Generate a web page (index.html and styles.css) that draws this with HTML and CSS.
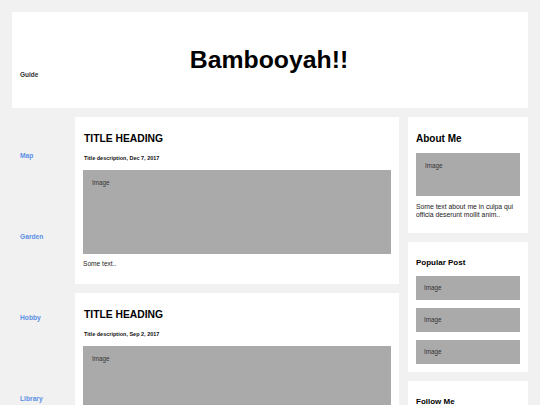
FILE: index.html
```html
<!DOCTYPE html>
<html lang="en">
<head>
  <meta charset="UTF-8" />
  <meta name="viewport" content="width=device-width, initial-scale=1.0" />
  <title>Bambooyah!!</title>
  <link rel="stylesheet" href="styles.css">
</head>
<body>
  <header class="masthead">
    <div class="masthead-nav">
      <a href="#" class="guide-link">Guide</a>
    </div>
    <h1 class="site-title">Bambooyah!!</h1>
    <div></div>
  </header>
  <div class="layout">
    <nav class="side-nav">
      <a href="#">Map</a>
      <a href="#">Garden</a>
      <a href="#">Hobby</a>
      <a href="#">Library</a>
    </nav>
    <main class="posts">
      <div class="card post">
        <h2>TITLE HEADING</h2>
        <h5>Title description, Dec 7, 2017</h5>
        <div class="fake-img post-img">Image</div>
        <p>Some text..</p>
      </div>
      <div class="card post">
        <h2>TITLE HEADING</h2>
        <h5>Title description, Sep 2, 2017</h5>
        <div class="fake-img post-img">Image</div>
        <p>Some text..</p>
      </div>
    </main>
    <aside class="sidebar">
      <div class="card about">
        <h3>About Me</h3>
        <div class="fake-img about-img">Image</div>
        <p>Some text about me in culpa qui officia deserunt mollit anim..</p>
      </div>
      <div class="card popular">
        <h4>Popular Post</h4>
        <div class="fake-img small-img">Image</div>
        <div class="fake-img small-img">Image</div>
        <div class="fake-img small-img">Image</div>
      </div>
      <div class="card follow">
        <h4>Follow Me</h4>
        <p>Some text..</p>
      </div>
    </aside>
  </div>
</body>
</html>
```

FILE: styles.css
```css
html, body {
  overflow: hidden;
}
body {
  font-family: 'Liberation Sans', Arial, sans-serif;
  background: #f1f1f1;
  margin: 0;
  padding: 12px;
  color: #222;
}
.masthead {
  background: #fff;
  height: 96px;
  display: grid;
  grid-template-columns: 1fr auto 1fr;
  align-items: center;
  margin-bottom: 9px;
}
.masthead-nav {
  align-self: end;
  padding: 0 0 29px 8px;
  line-height: 8px;
}
.guide-link {
  font-size: 6.5px;
  font-weight: 700;
  color: #333;
  text-decoration: none;
}
.site-title {
  margin: 0 0 0 -2px;
  font-size: 24.8px;
  line-height: 28px;
  font-weight: 700;
  color: #000;
}
.layout {
  display: grid;
  grid-template-columns: 54px 324px 120px;
  gap: 9px;
  align-items: start;
}
.side-nav {
  display: flex;
  flex-direction: column;
}
.side-nav a {
  display: block;
  height: 81px;
  line-height: 78px;
  padding-left: 8px;
  font-size: 6.7px;
  font-weight: 700;
  color: #5b8fe6;
  text-decoration: none;
}
.posts, .sidebar {
  display: flex;
  flex-direction: column;
  gap: 9px;
}
.card {
  background: #fff;
  padding: 8px;
}
.card h2 {
  margin: 8px 0 0 1px;
  font-size: 10.3px;
  line-height: 12px;
  color: #000;
}
.card h5 {
  margin: 10px 0 0 1px;
  font-size: 5.5px;
  line-height: 7px;
  color: #111;
}
.fake-img {
  background: #aaa;
  color: #333;
  font-size: 6.3px;
  line-height: 8px;
}
.post-img {
  height: 84px;
  margin-top: 8px;
  padding: 8.5px 9px 0;
  box-sizing: border-box;
}
.post p {
  margin: 6px 0 8px;
  font-size: 6.6px;
  line-height: 8px;
}
.card h3 {
  margin: 8px 0 0;
  font-size: 10px;
  line-height: 12px;
  color: #000;
}
.about-img {
  height: 43px;
  margin-top: 8px;
  padding: 8.5px 9px 0;
  box-sizing: border-box;
}
.about p {
  margin: 6.5px 0 5px;
  font-size: 6.8px;
  line-height: 8.5px;
}
.card h4 {
  margin: 8.5px 0 7.5px;
  font-size: 8px;
  line-height: 10px;
  color: #000;
}
.small-img {
  height: 24px;
  line-height: 24px;
  padding: 0 8px;
  margin-bottom: 8px;
}
.small-img:last-child {
  margin-bottom: 0;
}
.follow p {
  margin: 0;
  font-size: 6.5px;
  line-height: 8px;
}
```
